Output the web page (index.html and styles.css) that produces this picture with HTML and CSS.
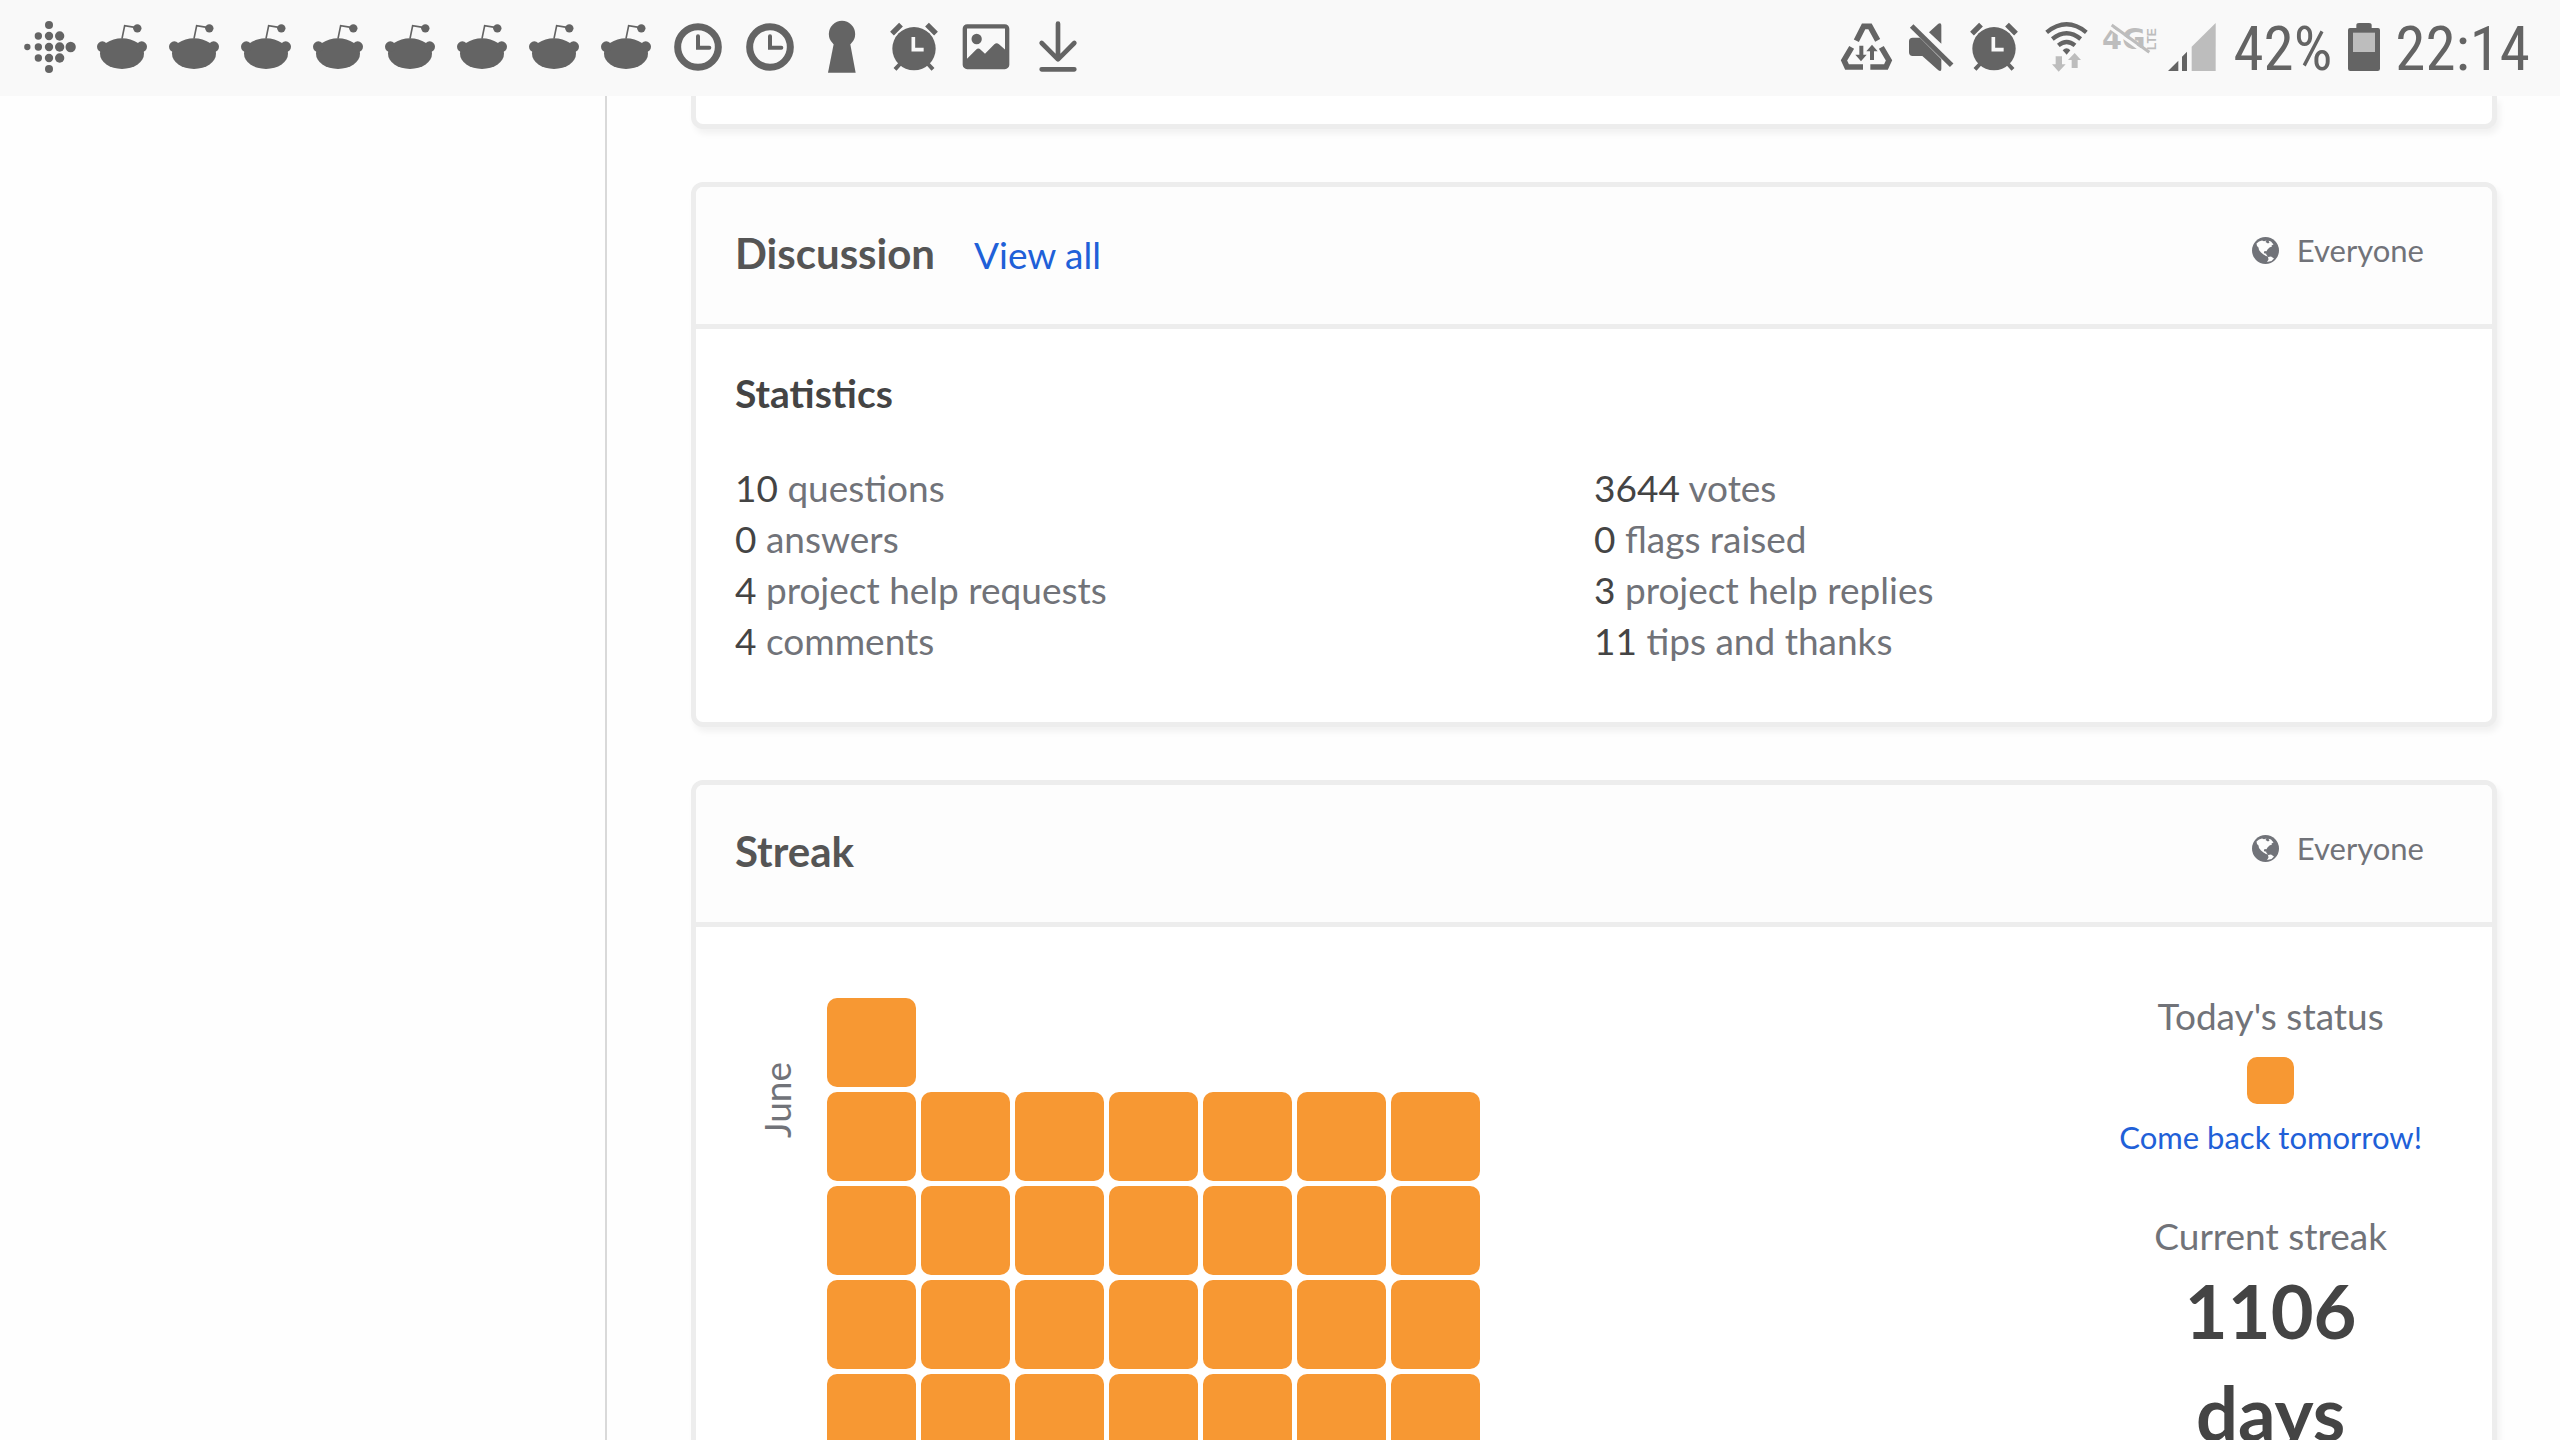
FILE: index.html
```
<!DOCTYPE html>
<html lang="en">
<head>
<meta charset="utf-8">
<title>Profile</title>
<link rel="stylesheet" href="styles.css">
</head>
<body>
<svg class="sprites" aria-hidden="true">
  <symbol id="alien" viewBox="0 0 216 288">
    <ellipse cx="108" cy="161" rx="66" ry="46"/>
    <circle cx="49" cy="140" r="16"/><circle cx="167" cy="140" r="16"/>
    <path d="M108 116L116 77L147 82" fill="none" stroke="currentColor" stroke-width="5"/>
    <circle cx="154" cy="85" r="12.5"/>
  </symbol>
  <symbol id="clock" viewBox="0 0 216 288">
    <g fill="none" stroke="currentColor"><circle cx="108" cy="141" r="61" stroke-width="21"/>
    <path d="M108 109V143H142" stroke-width="12" stroke-linecap="round"/></g>
  </symbol>
  <symbol id="alarm" viewBox="0 0 216 288">
    <circle cx="108" cy="146" r="65"/>
    <g fill="none" stroke="currentColor"><path d="M42 101L69 74M147 74L174 101" stroke-width="16"/>
    <path d="M51 208L66 192M165 208L150 192" stroke-width="12"/></g>
    <path class="knockout" d="M106 111V149H137" stroke-width="11"/>
  </symbol>
  <symbol id="globe" viewBox="0 0 27 27">
    <circle cx="13.5" cy="13.5" r="13.5"/>
    <path class="land" d="M4.500 6.500L7 4.500L10 3.500L12 4.200L14.500 3.500L13.500 5L16 6.500L17.500 5.500L16.500 3.800L19 4.500L21.500 7.500L19.500 8.500L20 9.500L17.500 10.500L15.500 12.500L14.500 14.200L12.500 14L11.800 16L13.500 16.800L14 16.200L14.500 18L16 19.500L14 19L11.500 17.500L9 15.500L7 13L6.500 10.500L5 9ZM16 20L19 19.500L22 21.500L19.500 24L15 25L16.500 22.500Z"/>
  </symbol>
</svg>

<div class="screen">
  <header class="status-bar">
    <div class="notifications">
      <svg class="slot" viewBox="42 0 216 288">
        <circle cx="82" cy="141" r="9.500"/>
        <circle cx="115" cy="108" r="11"/><circle cx="115" cy="141" r="11"/><circle cx="115" cy="174" r="11"/>
        <circle cx="147" cy="75" r="12"/><circle cx="147" cy="108" r="12.500"/><circle cx="147" cy="141" r="12.500"/><circle cx="147" cy="174" r="12.500"/><circle cx="147" cy="207" r="12"/>
        <circle cx="179" cy="108" r="14"/><circle cx="179" cy="141" r="14"/><circle cx="179" cy="174" r="14"/>
        <circle cx="212" cy="141" r="15.500"/>
      </svg>
      <svg class="slot"><use href="#alien"/></svg>
      <svg class="slot"><use href="#alien"/></svg>
      <svg class="slot"><use href="#alien"/></svg>
      <svg class="slot"><use href="#alien"/></svg>
      <svg class="slot"><use href="#alien"/></svg>
      <svg class="slot"><use href="#alien"/></svg>
      <svg class="slot"><use href="#alien"/></svg>
      <svg class="slot"><use href="#alien"/></svg>
      <svg class="slot"><use href="#clock"/></svg>
      <svg class="slot"><use href="#clock"/></svg>
      <svg class="slot" viewBox="0 0 216 288">
        <circle cx="108" cy="102" r="39.500"/><path d="M85 122H131L149 218H66Z"/>
      </svg>
      <svg class="slot"><use href="#alarm"/></svg>
      <svg class="slot" viewBox="0 0 216 288">
        <rect x="44.500" y="79" width="127" height="122" rx="7" fill="none" stroke="currentColor" stroke-width="13"/>
        <circle cx="80" cy="117" r="15.500"/>
        <path d="M48 179L78 149Q85 142 92 149L105 161L133 133Q140 127 147 133L170 153V204H48Z"/>
      </svg>
      <svg class="slot" viewBox="0 0 216 288">
        <path d="M108 71V176M59 129L108 178L157 129M59 208H157" fill="none" stroke="currentColor" stroke-width="14" stroke-linecap="round" stroke-linejoin="round"/>
      </svg>
    </div>
    <div class="system">
      <svg class="sys" viewBox="48 0 192 288">
        <path d="M109 122L131 79H150L173 121M95 142L72 181L81 201H129M184 142L207 181L198 201H151" fill="none" stroke="currentColor" stroke-width="17"/>
        <path d="M118 137H130V164H140L123 184L106 164H118ZM150 180V154H139L156 134L173 154H162V180Z"/>
      </svg>
      <svg class="sys" viewBox="240 0 192 288">
        <path d="M278 113H300L364 178V207Q364 216 355 211L307 168H278Q267 168 267 157V124Q267 113 278 113ZM327 97L355 71Q364 67 364 76V131Z"/>
        <path d="M275 78L395 196" fill="none" stroke="currentColor" stroke-width="15"/>
      </svg>
      <svg class="slot alarm-set"><use href="#alarm"/></svg>
      <svg class="sys" viewBox="648 0 192 288">
        <g fill="none" stroke="currentColor" stroke-width="13"><path d="M680 97Q740 49 799 97M697 117Q740 82 782 117M715 136Q740 116 765 136"/></g>
        <path d="M728 151Q740 139 751 151L740 164Z"/>
        <path class="faint" d="M707 169H726V193H737L716 215L696 193H707ZM755 204V180H744L764 159L783 180H773V204Z"/>
      </svg>
      <svg class="sys" viewBox="840 0 192 288">
        <text class="net" x="846" y="147">4G</text>
        <text class="lte" transform="translate(1009 150) rotate(-90)">LTE</text>
        <path class="halo" d="M872 84L980 163"/>
        <path class="slash" d="M875 75L988 157"/>
      </svg>
      <svg class="sys" viewBox="1032 0 192 288">
        <path class="faint" d="M1115 140L1187 69V213H1115Z"/>
        <path d="M1044 213L1075 182V213ZM1086 170L1101 155V213H1086Z"/>
      </svg>
      <span class="readout charge">42%</span>
      <svg class="battery" viewBox="0 0 96 288">
        <path d="M25 84V76Q25 69 33 69H63Q71 69 71 76V84H90Q96 84 96 90V206Q96 213 89 213H7Q0 213 0 206V90Q0 84 6 84Z"/>
        <path class="faint" d="M15 98H81V156H15Z"/>
      </svg>
      <time class="readout">22:14</time>
    </div>
  </header>

  <div class="page">
    <aside class="sidebar"></aside>
    <main class="content">
      <section class="card card-cut"></section>

      <section class="card">
        <div class="card-head">
          <div class="heading"><h2>Discussion</h2><a href="#discussion">View all</a></div>
          <div class="privacy"><svg class="globe"><use href="#globe"/></svg>Everyone</div>
        </div>
        <div class="stats">
          <h3>Statistics</h3>
          <div class="stat-columns">
            <ul>
              <li><b>10</b> questions</li>
              <li><b>0</b> answers</li>
              <li><b>4</b> project help requests</li>
              <li><b>4</b> comments</li>
            </ul>
            <ul>
              <li><b>3644</b> votes</li>
              <li><b>0</b> flags raised</li>
              <li><b>3</b> project help replies</li>
              <li><b>11</b> tips and thanks</li>
            </ul>
          </div>
        </div>
      </section>

      <section class="card">
        <div class="card-head">
          <div class="heading"><h2>Streak</h2></div>
          <div class="privacy"><svg class="globe"><use href="#globe"/></svg>Everyone</div>
        </div>
        <div class="streak">
          <div class="month">
            <div class="month-name">June</div>
            <div class="days">
              <i class="day"></i>
              <i class="day first"></i><i class="day"></i><i class="day"></i><i class="day"></i><i class="day"></i><i class="day"></i><i class="day"></i>
              <i class="day"></i><i class="day"></i><i class="day"></i><i class="day"></i><i class="day"></i><i class="day"></i><i class="day"></i>
              <i class="day"></i><i class="day"></i><i class="day"></i><i class="day"></i><i class="day"></i><i class="day"></i><i class="day"></i>
              <i class="day"></i><i class="day"></i><i class="day"></i><i class="day"></i><i class="day"></i><i class="day"></i><i class="day"></i>
            </div>
          </div>
          <div class="summary">
            <p class="label">Today's status</p>
            <i class="today"></i>
            <a href="#tomorrow">Come back tomorrow!</a>
            <p class="label current">Current streak</p>
            <p class="count">1106<br>days</p>
          </div>
        </div>
      </section>
    </main>
  </div>
</div>
</body>
</html>
```
FILE: styles.css
```
* { box-sizing: border-box; }
body { margin: 0; background: #fefefe; color: #717379; font-family: Lato, sans-serif; font-size: 37px; }
h2, h3, p, ul { margin: 0; padding: 0; }
ul { list-style: none; }
a { color: #2060d8; text-decoration: none; }
svg { display: block; fill: currentColor; flex: none; }
.sprites { position: absolute; width: 0; height: 0; }
.screen { height: 100vh; display: flex; flex-direction: column; overflow: hidden; }

.status-bar { flex: none; display: flex; justify-content: space-between; height: 96px; padding: 0 30px 0 14px; background: #f9f9f9; color: #646464; }
.notifications, .system { display: flex; align-items: center; }
.slot { width: 72px; height: 96px; }
.sys { width: 64px; height: 96px; }
.alarm-set { margin: 0 6px 0 -6px; }
.battery { width: 32px; height: 96px; margin: 0 15px 0 16px; }
.readout { padding-top: 2px; font-family: "Roboto Condensed", Roboto, sans-serif; font-size: 61px; line-height: 96px; }
.charge { margin-left: 5px; }
.knockout { fill: none; stroke: #f9f9f9; }
.faint { fill: #bdbdbd; }
.net, .lte { font-weight: 700; fill: #bdbdbd; }
.net { font-family: "DejaVu Sans", sans-serif; font-size: 86px; }
.lte { font-family: "Liberation Sans", sans-serif; font-size: 36px; }
.halo, .slash { fill: none; stroke-width: 9px; }
.halo { stroke: #f9f9f9; }
.slash { stroke: #bdbdbd; }

.page { flex: 1; min-height: 0; display: flex; }
.sidebar { width: 607px; flex: none; border-right: 2px solid #d9d9d9; }
.content { flex: 1; padding: 0 63px 0 84px; }
.card { margin-bottom: 53px; border: 5px solid #ededed; border-radius: 12px; background: #fff; box-shadow: 3px 5px 6px rgba(0, 0, 0, .05); }
.card-cut { height: 33px; border-top: 0; border-top-left-radius: 0; border-top-right-radius: 0; }
.card-head { display: flex; justify-content: space-between; align-items: flex-start; padding: 36px 68px 41px 39px; border-bottom: 5px solid #ededed; border-radius: 7px 7px 0 0; background: #fdfdfd; }
.heading { display: flex; align-items: baseline; gap: 39px; height: 60px; line-height: 60px; }
h2 { font-size: 42px; color: #555; }
.privacy { display: flex; align-items: center; gap: 18px; font-size: 31px; line-height: 54px; }
.globe { width: 27px; height: 27px; }
.land { fill: #fdfdfd; }

.stats { padding: 40px 39px 56px; }
h3 { margin-bottom: 45px; font-size: 39px; line-height: 48px; color: #444; }
.stat-columns { display: grid; grid-template-columns: 1fr 1fr; line-height: 51px; }
.stat-columns b { font-weight: 400; color: #444; }

.streak { display: flex; justify-content: space-between; padding: 65px 70px 56px 66px; }
.month { display: flex; gap: 35px; padding-top: 6px; }
.month-name { align-self: flex-start; margin-top: 64px; writing-mode: vertical-rl; transform: rotate(180deg); line-height: 30px; }
.days { display: grid; grid-template-columns: repeat(7, 89px); grid-auto-rows: 89px; gap: 5px; }
.day { border-radius: 10px; background: #f79833; }
.day.first { grid-column-start: 1; }
.summary { display: flex; flex-direction: column; align-items: center; text-align: center; line-height: 48px; }
.summary a { margin-top: 9px; font-size: 31px; }
.today { width: 47px; height: 47px; margin-top: 17px; border-radius: 10px; background: #f79833; }
.current { margin-top: 51px; }
.count { font-size: 74px; font-weight: 700; line-height: 102px; color: #444; }
```
